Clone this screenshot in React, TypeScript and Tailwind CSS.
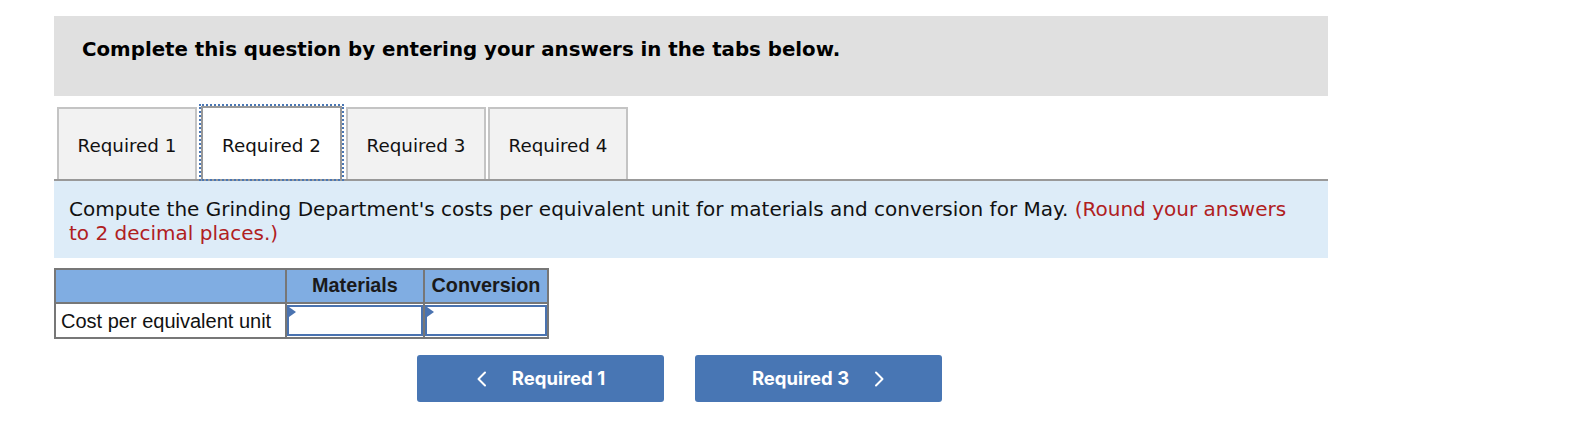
const verdana = { fontFamily: '"DejaVu Sans", Verdana, sans-serif' };

const tabs = ['Required 1', 'Required 2', 'Required 3', 'Required 4'];

function Tab({ label, active }: { label: string; active?: boolean }) {
  if (active) {
    return (
      <div className="relative z-10 -mb-[2px] -mt-[3px] h-[77px] w-[145px] border-2 border-dotted border-[#4a77b4]">
        <div className="flex h-full items-center justify-center border-2 border-b-0 border-[#999] bg-white pt-[5px] text-[18.3px] text-[#111]">
          {label}
        </div>
      </div>
    );
  }
  return (
    <div className="flex h-[72px] w-[140px] items-center justify-center border-2 border-b-0 border-[#c4c4c4] bg-[#f2f2f2] pt-[3px] text-[18.3px] text-[#111]">
      {label}
    </div>
  );
}

function Chevron({ dir }: { dir: 'left' | 'right' }) {
  return (
    <svg width="12" height="16" viewBox="0 0 12 16" fill="none" stroke="currentColor" strokeWidth="2" strokeLinecap="round" strokeLinejoin="round">
      {dir === 'left' ? <polyline points="9,1.5 2.5,8 9,14.5" /> : <polyline points="3,1.5 9.5,8 3,14.5" />}
    </svg>
  );
}

function InputCell() {
  return (
    <td className="border-2 border-[#777] p-0">
      <div className="relative h-[31px] border-2 border-[#4a73b0] bg-white">
        <span className="absolute left-0 top-0 h-0 w-0 border-y-[5px] border-l-[7px] border-y-transparent border-l-[#4a73b0]" />
      </div>
    </td>
  );
}

export default function App() {
  return (
    <div className="h-[448px] w-[1570px] bg-white pl-[54px] pt-4" style={verdana}>
      <div className="w-[1274px]">
        <div className="h-[80px] bg-[#e0e0e0] pl-7 pt-[22px]">
          <p className="text-[19.8px] font-bold leading-6 text-black">
            Complete this question by entering your answers in the tabs below.
          </p>
        </div>

        <div className="mt-[11px] flex items-end gap-[2px] border-b-2 border-[#999] pl-[3px]">
          {tabs.map((t, i) => (
            <Tab key={t} label={t} active={i === 1} />
          ))}
        </div>

        <div className="bg-[#ddecf8] pb-[13px] pl-[15px] pr-[30px] pt-[16px] text-[20px] leading-6 text-[#111]">
          <p>
            Compute the Grinding Department's costs per equivalent unit for materials and conversion for May.{' '}
            <span className="text-[#b0201e]">(Round your answers to 2 decimal places.)</span>
          </p>
        </div>

        <table
          className="mt-[10px] border-collapse text-[20px] text-[#111]"
          style={{ fontFamily: '"Liberation Sans", Arial, sans-serif' }}
        >
          <thead>
            <tr className="h-[34px] bg-[#80ade2]">
              <th className="w-[231px] border-2 border-[#777]"></th>
              <th className="w-[138px] border-2 border-[#777] text-center text-[19.8px] font-bold text-[#1a1a1a]">Materials</th>
              <th className="w-[124px] border-2 border-[#777] text-center text-[19.8px] font-bold text-[#1a1a1a]">Conversion</th>
            </tr>
          </thead>
          <tbody>
            <tr className="h-[35px] bg-white">
              <td className="whitespace-nowrap border-2 border-[#777] px-[5px]">Cost per equivalent unit</td>
              <InputCell />
              <InputCell />
            </tr>
          </tbody>
        </table>

        <div className="mt-[16px] flex gap-[31px] pl-[363px]" style={{ fontFamily: 'Inter, Roboto, sans-serif' }}>
          <button className="flex h-[47px] w-[247px] items-center justify-center gap-[24px] rounded-[3px] bg-[#4876b4] text-[18.5px] font-bold text-white">
            <Chevron dir="left" />
            <span>Required 1</span>
          </button>
          <button className="flex h-[47px] w-[247px] items-center justify-center gap-[24px] rounded-[3px] bg-[#4876b4] text-[18.5px] font-bold text-white">
            <span>Required 3</span>
            <Chevron dir="right" />
          </button>
        </div>
      </div>
    </div>
  );
}
